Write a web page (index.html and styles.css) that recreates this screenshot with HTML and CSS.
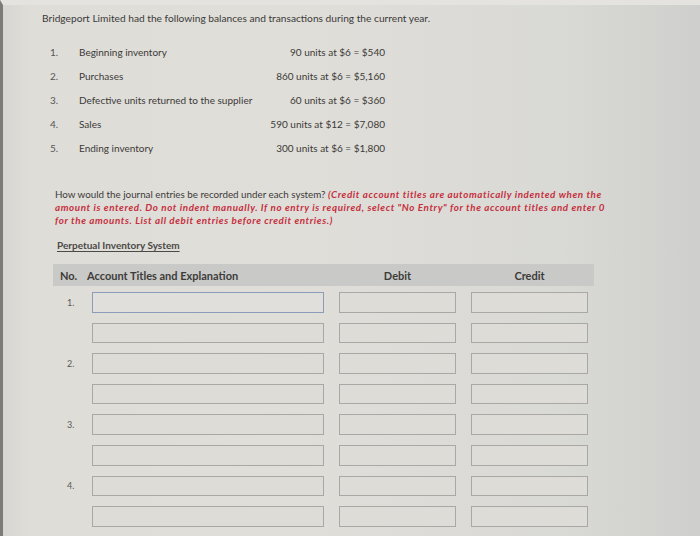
FILE: index.html
```html
<!DOCTYPE html>
<html>
<head>
<meta charset="utf-8">
<link rel="stylesheet" href="styles.css">
</head>
<body>
<div class="page">
  <p class="intro">Bridgeport Limited had the following balances and transactions during the current year.</p>
  <ol class="facts">
    <li class="fact"><span class="fact-no">1.</span><span class="fact-label">Beginning inventory</span><span class="fact-value">90 units at $6 = $540</span></li>
    <li class="fact"><span class="fact-no">2.</span><span class="fact-label">Purchases</span><span class="fact-value">860 units at $6 = $5,160</span></li>
    <li class="fact"><span class="fact-no">3.</span><span class="fact-label">Defective units returned to the supplier</span><span class="fact-value">60 units at $6 = $360</span></li>
    <li class="fact"><span class="fact-no">4.</span><span class="fact-label">Sales</span><span class="fact-value">590 units at $12 = $7,080</span></li>
    <li class="fact"><span class="fact-no">5.</span><span class="fact-label">Ending inventory</span><span class="fact-value">300 units at $6 = $1,800</span></li>
  </ol>
  <p class="question">How would the journal entries be recorded under each system? <em class="note">(Credit account titles are automatically indented when the<br>amount is entered. Do not indent manually. If no entry is required, select "No Entry" for the account titles and enter 0<br>for the amounts. List all debit entries before credit entries.)</em></p>
  <p class="system">Perpetual Inventory System</p>
  <div class="journal">
    <div class="jhead">
      <span class="h-no">No.</span>
      <span class="h-acct">Account Titles and Explanation</span>
      <span class="h-amt">Debit</span>
      <span class="h-amt h-credit">Credit</span>
    </div>
    <div class="jrow"><span class="r-no">1.</span><span class="box acct focus"></span><span class="box amt"></span><span class="box amt"></span></div>
    <div class="jrow"><span class="r-no"></span><span class="box acct"></span><span class="box amt"></span><span class="box amt"></span></div>
    <div class="jrow"><span class="r-no">2.</span><span class="box acct"></span><span class="box amt"></span><span class="box amt"></span></div>
    <div class="jrow"><span class="r-no"></span><span class="box acct"></span><span class="box amt"></span><span class="box amt"></span></div>
    <div class="jrow"><span class="r-no">3.</span><span class="box acct"></span><span class="box amt"></span><span class="box amt"></span></div>
    <div class="jrow"><span class="r-no"></span><span class="box acct"></span><span class="box amt"></span><span class="box amt"></span></div>
    <div class="jrow"><span class="r-no">4.</span><span class="box acct"></span><span class="box amt"></span><span class="box amt"></span></div>
    <div class="jrow"><span class="r-no"></span><span class="box acct"></span><span class="box amt"></span><span class="box amt"></span></div>
  </div>
</div>
</body>
</html>
```

FILE: styles.css
```css
html, body {
  margin: 0;
  padding: 0;
  height: 100%;
}
body {
  background: linear-gradient(90deg, #d6d5d1 0px, #dfddd8 30px, #e0ded9 300px, #d9d9d5 560px, #cfd0cd 700px);
  font-family: Lato, "Open Sans", sans-serif;
  color: #3b3a38;
  overflow: hidden;
}
.page {
  height: 536px;
  box-sizing: border-box;
  border-left: 3px solid #7c7b78;
  border-top: 5px solid #e4e3df;
  padding: 6px 0 0 39px;
}
.intro {
  margin: 0;
  font-size: 10.2px;
  line-height: 14px;
}
.facts {
  list-style: none;
  margin: 15px 0 0 0;
  padding: 0;
  width: 343px;
}
.fact {
  display: flex;
  align-items: center;
  height: 24px;
  font-size: 10px;
}
.fact-no {
  width: 10px;
  margin-left: 8px;
  color: #555;
}
.fact-label {
  margin-left: 19px;
  flex: 1;
}
.fact-value {
  text-align: right;
}
.question {
  margin: 28px 0 0 13px;
  font-size: 9.8px;
  line-height: 13px;
  color: #3b3a38;
}
.note {
  color: #c5303e;
  font-weight: bold;
  font-style: italic;
  letter-spacing: 0.6px;
}
.system {
  margin: 12px 0 0 15px;
  font-size: 10px;
  font-weight: bold;
  color: #4a4946;
  text-decoration: underline;
  text-underline-offset: 2px;
}
.journal {
  margin: 13px 0 0 11px;
  width: 541px;
}
.jhead {
  display: grid;
  grid-template-columns: 27px 252px 117px 132px;
  align-items: center;
  height: 22px;
  background: #c9c9c7;
  font-size: 11px;
  font-weight: bold;
  color: #3d3c3a;
  padding-left: 7px;
  box-sizing: border-box;
}
.h-amt {
  text-align: center;
}
.h-credit {
  padding-left: 15px;
}
.jrow {
  display: grid;
  grid-template-columns: 24px 232px 117px 117px;
  column-gap: 15px;
  align-items: center;
  height: 20.6px;
  margin-top: 10px;
}
.jhead + .jrow {
  margin-top: 6px;
}
.r-no {
  font-size: 9px;
  color: #5a5956;
  padding-left: 14px;
}
.box {
  height: 100%;
  box-sizing: border-box;
  border: 1px solid #a9a8a4;
  background: #dedcd6;
}
.box.focus {
  border: 1.5px solid #8c9bb9;
  background: #e1dfdb;
}
```
